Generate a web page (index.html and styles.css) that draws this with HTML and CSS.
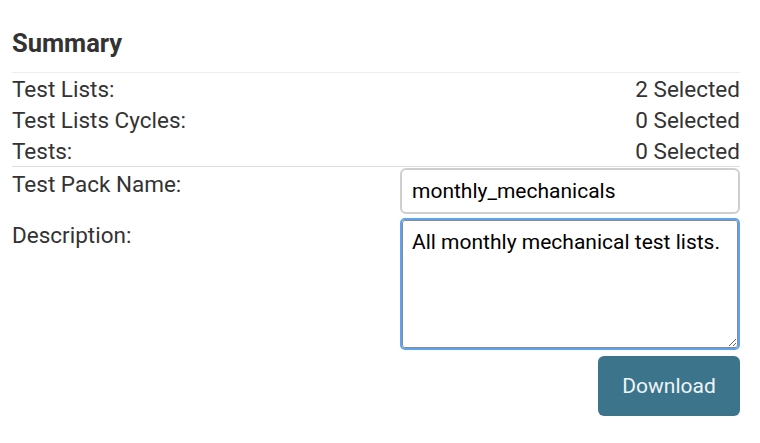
FILE: index.html
```html
<!DOCTYPE html>
<html>
<head>
<meta charset="utf-8">
<link rel="stylesheet" href="styles.css">
</head>
<body>
<div class="panel">
  <h3 class="title">Summary</h3>
  <div class="summary">
    <div class="row"><span>Test Lists:</span><span>2 Selected</span></div>
    <div class="row"><span>Test Lists Cycles:</span><span>0 Selected</span></div>
    <div class="row"><span>Tests:</span><span>0 Selected</span></div>
  </div>
  <div class="form">
    <label class="lbl">Test Pack Name:</label>
    <input class="field" type="text" value="monthly_mechanicals">
    <label class="lbl lbl-desc">Description:</label>
    <textarea class="area">All monthly mechanical test lists.</textarea>
    <div></div>
    <div class="actions"><button class="btn">Download</button></div>
  </div>
</div>
</body>
</html>
```
FILE: styles.css
```css
html, body {
  margin: 0;
  padding: 0;
  background: #fff;
}
body {
  font-family: Roboto, "Liberation Sans", sans-serif;
  font-size: 22.5px;
  color: #333;
}
.panel {
  padding: 0 20px 0 12px;
}
.title {
  margin: 0;
  padding-top: 27px;
  height: 72px;
  box-sizing: border-box;
  font-size: 25.5px;
  font-weight: 700;
  line-height: 32px;
  color: #333;
}
.summary {
  border-top: 1px solid #eee;
  border-bottom: 1px solid #ddd;
}
.row {
  display: flex;
  justify-content: space-between;
  height: 31px;
  line-height: 33px;
}
.form {
  display: grid;
  grid-template-columns: 1fr 340px;
  row-gap: 4px;
  padding-top: 1px;
}
.lbl {
  line-height: 31px;
  padding-top: 1px;
}
.lbl-desc {
  padding-top: 2px;
}
.field {
  box-sizing: border-box;
  width: 340px;
  height: 46px;
  border: 2px solid #cfcfcf;
  border-radius: 6px;
  padding: 0 10px;
  font-family: Roboto, "Liberation Sans", sans-serif;
  font-size: 21px;
  color: #000;
  outline: none;
}
.area {
  box-sizing: border-box;
  width: 336px;
  height: 128px;
  margin: 2px;
  border: 1px solid #8a8a8a;
  border-radius: 3px;
  outline: 2px solid #5ea2f0;
  padding: 8px 9px;
  font-family: Roboto, "Liberation Sans", sans-serif;
  font-size: 21px;
  line-height: 26px;
  color: #000;
}
.actions {
  display: flex;
  justify-content: flex-end;
  padding-top: 2px;
}
.btn {
  width: 142px;
  height: 60px;
  border: none;
  border-radius: 6px;
  background: #3c758b;
  color: #eef4f7;
  font-family: Roboto, "Liberation Sans", sans-serif;
  font-size: 21px;
}
```
